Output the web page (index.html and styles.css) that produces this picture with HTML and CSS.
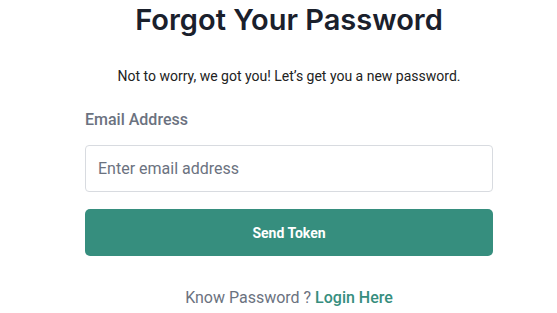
FILE: index.html
```html
<!DOCTYPE html>
<html lang="en">
<head>
    <meta charset="UTF-8">
    <title>Forgot Password</title>
    <link rel="stylesheet" href="styles.css">
</head>
<body>

<div class="wrapper">
    <h1>Forgot Your Password</h1>
    <p class="subtitle">Not to worry, we got you! Let’s get you a new password.</p>

    <form class="form">
        <label for="email">Email Address</label>
        <input type="email" id="email" placeholder="Enter email address">
        <button type="button">Send Token</button>
    </form>

    <p class="footer">Know Password ? <a href="#">Login Here</a></p>
</div>

</body>
</html>
```

FILE: styles.css
```css
body {
    margin: 0;
    font-family: Roboto, "Liberation Sans", sans-serif;
    background: #fff;
    color: #1f2937;
}
.wrapper {
    width: 408px;
    margin-left: 85px;
    text-align: center;
}
h1 {
    margin: 0;
    padding-top: 2px;
    font-family: Inter, "Open Sans", sans-serif;
    font-weight: 600;
    font-size: 29px;
    line-height: 36px;
    color: #1a202c;
}
.subtitle {
    margin: 29px 0 0;
    font-size: 14px;
    line-height: 18px;
    color: #222;
}
.form {
    display: flex;
    flex-direction: column;
    text-align: left;
    margin-top: 25px;
}
label {
    font-size: 16px;
    font-weight: 500;
    color: #6b7280;
    line-height: 20px;
}
input {
    margin-top: 15px;
    height: 47px;
    box-sizing: border-box;
    border: 1px solid #d8dbe0;
    border-radius: 4px;
    padding: 0 12px;
    font-family: Roboto, sans-serif;
    font-size: 16px;
    color: #374151;
}
input::placeholder {
    color: #6b7280;
}
button {
    margin-top: 17px;
    height: 47px;
    border: none;
    border-radius: 5px;
    background: #368e7e;
    color: #fff;
    font-family: Roboto, sans-serif;
    font-weight: 700;
    font-size: 14px;
}
.footer {
    margin: 32px 0 0;
    font-size: 16px;
    color: #6b7280;
}
.footer a {
    color: #368e7e;
    font-weight: 500;
    text-decoration: none;
}
```
